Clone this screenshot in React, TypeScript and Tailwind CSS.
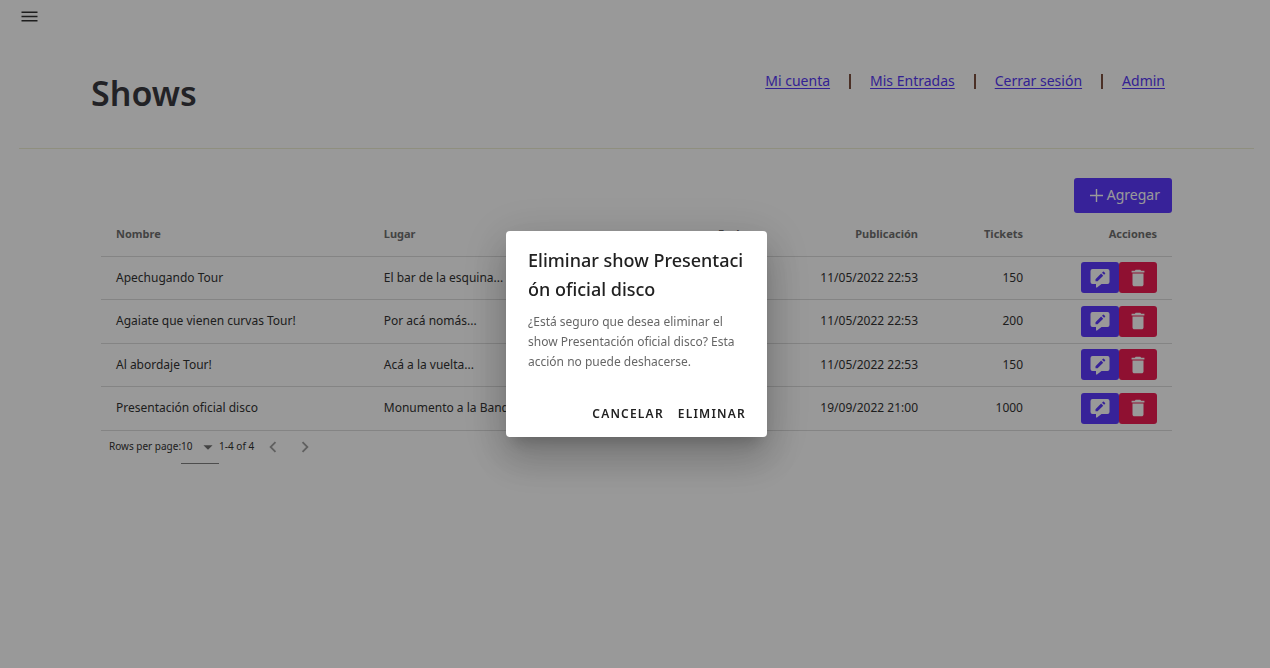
import { Fragment } from "react";
import { MdArrowDropDown, MdChevronLeft, MdChevronRight, MdDelete } from "react-icons/md";

const links = ["Mi cuenta", "Mis Entradas", "Cerrar sesión", "Admin"];

const shows = [
  { name: "Apechugando Tour", place: "El bar de la esquina...", published: "11/05/2022 22:53", tickets: 150 },
  { name: "Agaiate que vienen curvas Tour!", place: "Por acá nomás...", published: "11/05/2022 22:53", tickets: 200 },
  { name: "Al abordaje Tour!", place: "Acá a la vuelta...", published: "11/05/2022 22:53", tickets: 150 },
  { name: "Presentación oficial disco", place: "Monumento a la Band...", published: "19/09/2022 21:00", tickets: 1000 },
];

function EditIcon() {
  return (
    <svg width="24" height="24" viewBox="0 0 24 24" aria-hidden="true">
      <path
        fill="currentColor"
        fillRule="evenodd"
        d="M4.5 3h15a2 2 0 0 1 2 2v11a2 2 0 0 1-2 2h-6L9 21.5h-1V18H4.500a2 2 0 0 1-2-2V5a2 2 0 0 1 2-2z
           M7.500 15.300h2.100l5.600-5.600-2.100-2.100-5.600 5.600z
           M14 6.700l2.100 2.100 1-1a.6.6 0 0 0 0-.85L15.850 5.700a.6.6 0 0 0-.85 0z"
      />
    </svg>
  );
}

function Header() {
  return (
    <header className="ml-[19px] mr-4 flex h-[117px] items-start justify-between border-b border-[#efefd4] pl-[72px] pr-[89px]">
      <h1 className="mt-9 text-[34px] leading-[50px] font-semibold text-[#3a3a40]">Shows</h1>
      <nav className="mt-[37px] flex items-center gap-[19px] text-[14px] leading-6">
        {links.map((link, i) => (
          <Fragment key={link}>
            {i > 0 && <span aria-hidden="true" className="h-[15px] w-0.5 bg-[#7d5040]" />}
            <a href="#" className="text-[#5637f5] underline underline-offset-2">{link}</a>
          </Fragment>
        ))}
      </nav>
    </header>
  );
}

function ShowsTable() {
  return (
    <table className="w-full table-fixed border-collapse text-[12px] text-[#333]">
      <colgroup>
        <col className="w-[25%]" />
        <col className="w-[24%]" />
        <col />
        <col className="w-[168px]" />
        <col className="w-[105px]" />
        <col className="w-[134px]" />
      </colgroup>
      <thead>
        <tr className="h-[43px] border-b border-[#dcdcdc] text-[11px] text-[#717171]">
          <th className="px-[15px] text-left font-bold">Nombre</th>
          <th className="px-[15px] text-left font-bold">Lugar</th>
          <th className="px-[15px] text-right font-bold">Fecha</th>
          <th className="px-[15px] text-right font-bold">Publicación</th>
          <th className="px-[15px] text-right font-bold">Tickets</th>
          <th className="px-[15px] text-right font-bold">Acciones</th>
        </tr>
      </thead>
      <tbody>
        {shows.map((show) => (
          <tr key={show.name} className="h-[43px] border-b border-[#dcdcdc] even:h-[44px]">
            <td className="px-[15px]">{show.name}</td>
            <td className="px-[15px] whitespace-nowrap">{show.place}</td>
            <td className="px-[15px]" />
            <td className="px-[15px] text-right whitespace-nowrap">{show.published}</td>
            <td className="px-[15px] text-right">{show.tickets}</td>
            <td className="px-[15px]">
              <div className="flex justify-end">
                <button aria-label={`Editar ${show.name}`} className="flex h-[31px] w-[38px] items-center justify-center rounded-[3px] bg-[#5d3aff] text-white">
                  <EditIcon />
                </button>
                <button aria-label={`Borrar ${show.name}`} className="flex h-[31px] w-[38px] items-center justify-center rounded-[3px] bg-[#ee1c53] text-white">
                  <MdDelete size={22} />
                </button>
              </div>
            </td>
          </tr>
        ))}
      </tbody>
    </table>
  );
}

function Pagination() {
  return (
    <div className="flex h-8 items-center pl-2 text-[10px] text-[#333]">
      <label htmlFor="rows">Rows per page:</label>
      <div className="relative flex h-[33px] w-[38px] items-center self-start border-b border-[#808080]">
        <select id="rows" defaultValue="10" className="w-full appearance-none bg-transparent">
          <option>10</option>
          <option>25</option>
        </select>
        <MdArrowDropDown size={22} className="pointer-events-none absolute right-0 text-[#717171]" />
      </div>
      <span>1-4 of 4</span>
      <button disabled aria-label="Página anterior" className="ml-2 text-[#a0a0a0]">
        <MdChevronLeft size={22} />
      </button>
      <button disabled aria-label="Página siguiente" className="ml-2.5 text-[#a0a0a0]">
        <MdChevronRight size={22} />
      </button>
    </div>
  );
}

function ConfirmDialog() {
  return (
    <div className="fixed inset-0 flex items-center justify-center bg-black/40 pl-[3px]">
      <section
        role="dialog"
        aria-modal="true"
        aria-labelledby="dialog-title"
        className="w-[261px] rounded-[4px] bg-white pt-[15px] pb-[7px] shadow-[0_11px_15px_-7px_rgba(0,0,0,0.2),0_24px_38px_3px_rgba(0,0,0,0.14),0_9px_46px_8px_rgba(0,0,0,0.12)]"
      >
        <h2 id="dialog-title" className="px-[22px] text-[18px] leading-[29px] font-medium whitespace-nowrap text-[#212121]">
          Eliminar show Presentaci
          <br />
          ón oficial disco
        </h2>
        <p className="mt-2 px-[22px] text-[12px] leading-5 text-[#666]">
          ¿Está seguro que desea eliminar el show Presentación oficial disco? Esta acción no puede deshacerse.
        </p>
        <div className="mt-[26px] flex justify-end pr-[14px] text-[12px] font-semibold tracking-widest text-[#212121]">
          <button className="h-8 px-[7px]">CANCELAR</button>
          <button className="h-8 px-[7px]">ELIMINAR</button>
        </div>
      </section>
    </div>
  );
}

export default function App() {
  return (
    <div className="min-h-screen bg-white font-['Noto_Sans',sans-serif]">
      <div className="flex h-8 items-center pl-[21px]">
        <button aria-label="Abrir menú" className="text-[#333]">
          <svg width="17" height="17" viewBox="0 0 17 17" stroke="currentColor" strokeWidth="1.6" fill="none">
            <path d="M0.5 4.2h16M0.5 8.5h16M0.5 12.8h16" />
          </svg>
        </button>
      </div>
      <Header />
      <main className="mr-[98px] ml-[101px] pt-[29px]">
        <div className="flex justify-end">
          <button className="flex h-[35px] items-center gap-1 rounded-[3px] bg-[#5d3aff] pr-3 pb-0.5 pl-4 text-[14px] text-white">
            <svg width="13" height="15" viewBox="0 0 13 15" stroke="currentColor" strokeWidth="1.4" fill="none" aria-hidden="true">
              <path d="M6.5 2v13M0 8.500h13" />
            </svg>
            Agregar
          </button>
        </div>
        <ShowsTable />
        <Pagination />
      </main>
      <ConfirmDialog />
    </div>
  );
}
